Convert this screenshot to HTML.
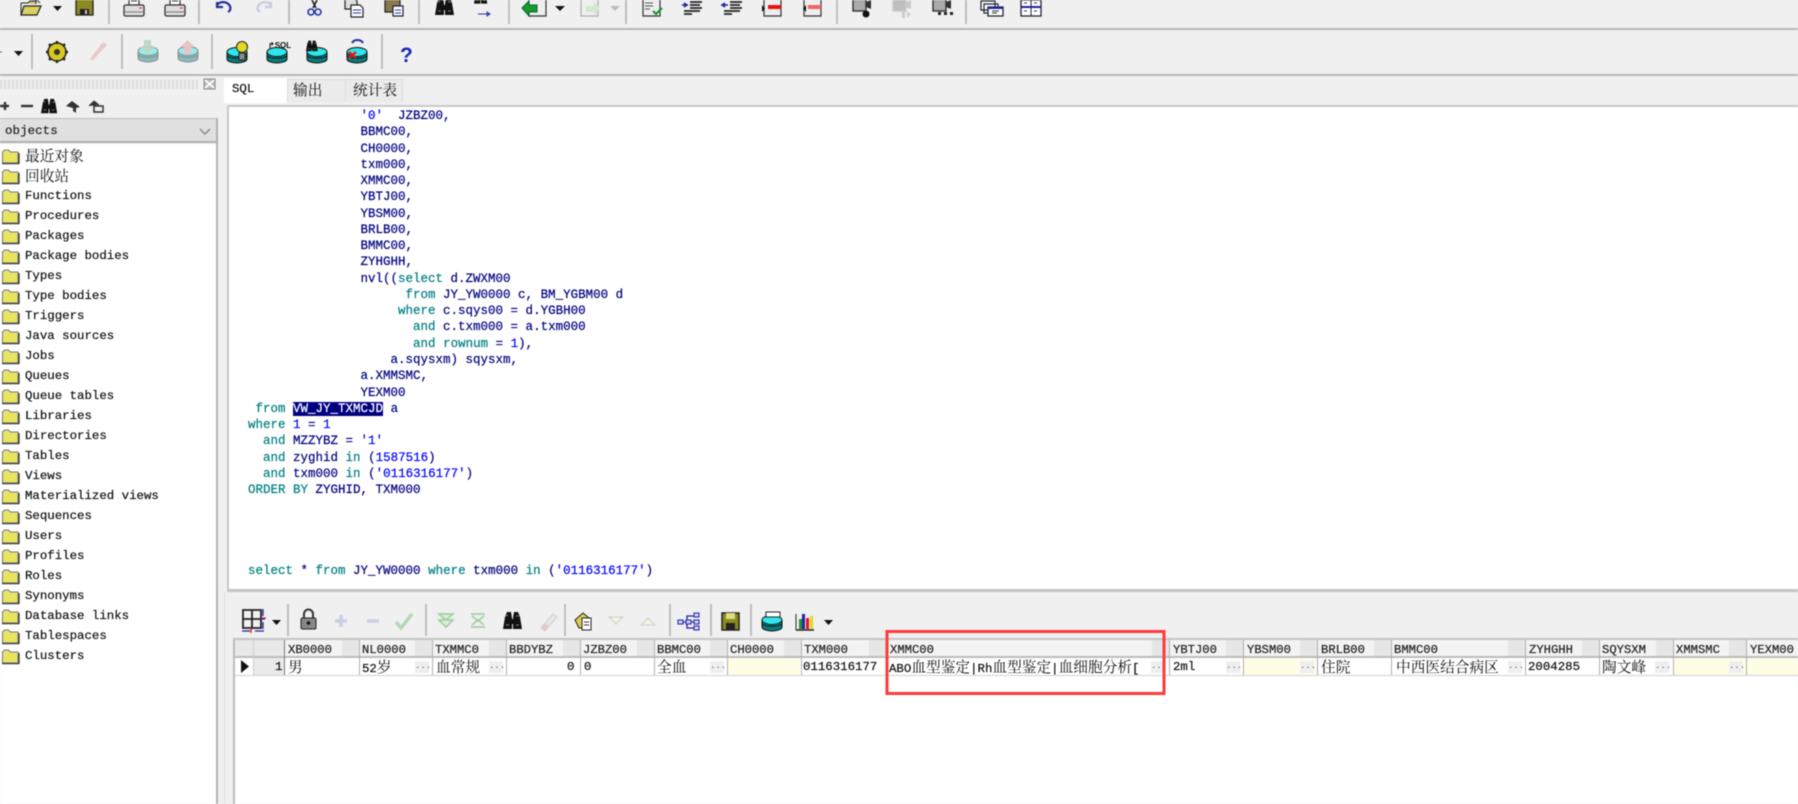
<!DOCTYPE html>
<html><head><meta charset="utf-8"><style>
html,body{margin:0;padding:0;background:#f0f0f0;overflow:hidden}
#r{position:relative;width:1798px;height:804px;overflow:hidden;background:#f0f0f0;filter:blur(.4px);font-family:"Liberation Mono","Noto Serif CJK SC",monospace;font-size:12.4px;color:#111;-webkit-text-stroke:.2px}
.a{position:absolute}
.t{position:absolute;white-space:nowrap;line-height:20px;height:20px}
.c{font-family:"Noto Serif CJK SC","Liberation Mono",serif;font-size:14.7px;-webkit-text-stroke:0}
pre{position:absolute;left:248px;top:108px;margin:0;font:12.5px/16.27px "Liberation Mono",monospace;color:#000080}
pre b{font-weight:normal;color:#008080}pre i{font-style:normal;color:#0000ff}
pre u{text-decoration:none;background:#000080;color:#fff}
.hd{position:absolute;top:641px;height:18px;line-height:18px;white-space:nowrap;color:#222;font-size:12.2px}
.v{position:absolute;top:658px;height:17px;line-height:18px;white-space:nowrap;color:#111}
.v span{font-family:"Noto Serif CJK SC",serif;font-size:14.7px;-webkit-text-stroke:0}
.b{position:absolute;top:661px;width:14px;height:12px;background:#eee;color:#666;font-size:9px;line-height:10px;text-align:center;-webkit-text-stroke:0}
.y{position:absolute;top:658px;height:17px;background:#fffde6}
.l{position:absolute;top:640px;width:1px;height:35px;background:#b0b0b0}
.s{position:absolute;width:2px;background:#bdbdbd}
.h{position:absolute;top:640px;width:17px;height:16px;background:#e6e6e6}
</style></head><body><div id="r">
<!-- bars -->
<div class="a" style="left:0;top:28px;width:1798px;height:2px;background:#b5b5b5"></div>
<div class="a" style="left:0;top:74px;width:1798px;height:2px;background:#b5b5b5"></div>
<!-- toolbar seps -->
<div class="s" style="left:108px;top:0;height:24px"></div><div class="s" style="left:198px;top:0;height:24px"></div><div class="s" style="left:288px;top:0;height:24px"></div><div class="s" style="left:418px;top:0;height:24px"></div><div class="s" style="left:508px;top:0;height:24px"></div><div class="s" style="left:625px;top:0;height:24px"></div><div class="s" style="left:836px;top:0;height:24px"></div><div class="s" style="left:965px;top:0;height:24px"></div>
<div class="s" style="left:31px;top:34px;height:35px"></div><div class="s" style="left:121px;top:34px;height:35px"></div><div class="s" style="left:211px;top:34px;height:35px"></div><div class="s" style="left:381px;top:34px;height:35px"></div>
<!-- left panel -->
<div class="a" style="left:0;top:80px;width:200px;height:9px;background:repeating-linear-gradient(90deg,#dcdcdc 0 2px,#f0f0f0 2px 4px)"></div>
<div class="a" style="left:0;top:118px;width:216px;height:25px;background:#e0e0e0;border-top:1px solid #bbb;border-bottom:2px solid #b0b0b0;box-sizing:border-box"></div>
<div class="t" style="left:5px;top:121px;color:#222;letter-spacing:.1px">objects</div>
<div class="a" style="left:0;top:144px;width:216px;height:660px;background:#fff"></div>
<div class="a" style="left:216px;top:118px;width:2px;height:686px;background:#b2b2b2"></div>
<div class="a" style="left:224px;top:592px;width:1px;height:212px;background:#dedede"></div>
<div class="t c" style="left:25px;top:146px">最近对象</div>
<div class="t c" style="left:25px;top:166px">回收站</div>
<div class="t" style="left:25px;top:186px">Functions</div>
<div class="t" style="left:25px;top:206px">Procedures</div>
<div class="t" style="left:25px;top:226px">Packages</div>
<div class="t" style="left:25px;top:246px">Package bodies</div>
<div class="t" style="left:25px;top:266px">Types</div>
<div class="t" style="left:25px;top:286px">Type bodies</div>
<div class="t" style="left:25px;top:306px">Triggers</div>
<div class="t" style="left:25px;top:326px">Java sources</div>
<div class="t" style="left:25px;top:346px">Jobs</div>
<div class="t" style="left:25px;top:366px">Queues</div>
<div class="t" style="left:25px;top:386px">Queue tables</div>
<div class="t" style="left:25px;top:406px">Libraries</div>
<div class="t" style="left:25px;top:426px">Directories</div>
<div class="t" style="left:25px;top:446px">Tables</div>
<div class="t" style="left:25px;top:466px">Views</div>
<div class="t" style="left:25px;top:486px">Materialized views</div>
<div class="t" style="left:25px;top:506px">Sequences</div>
<div class="t" style="left:25px;top:526px">Users</div>
<div class="t" style="left:25px;top:546px">Profiles</div>
<div class="t" style="left:25px;top:566px">Roles</div>
<div class="t" style="left:25px;top:586px">Synonyms</div>
<div class="t" style="left:25px;top:606px">Database links</div>
<div class="t" style="left:25px;top:626px">Tablespaces</div>
<div class="t" style="left:25px;top:646px">Clusters</div>
<!-- tabs -->
<div class="a" style="left:287px;top:79px;width:57px;height:22px;background:#ebebeb;border:1px solid #ddd;border-bottom:none"></div>
<div class="a" style="left:345px;top:79px;width:56px;height:22px;background:#ebebeb;border:1px solid #ddd;border-bottom:none"></div>
<div class="a" style="left:224px;top:78px;width:63px;height:25px;background:#fff"></div>
<div class="t" style="left:232px;top:79px">SQL</div>
<div class="t c" style="left:293px;top:80px">输出</div>
<div class="t c" style="left:353px;top:80px">统计表</div>
<!-- editor -->
<div class="a" style="left:227px;top:105px;width:1571px;height:484px;background:#fff;border-top:2px solid #c8c8c8;border-left:2px solid #c8c8c8;box-sizing:border-box"></div>
<div class="a" style="left:227px;top:589px;width:1571px;height:3px;background:#c4c4c4"></div>
<pre>               <i>'0'</i>  JZBZ00,
               BBMC00,
               CH0000,
               txm000,
               XMMC00,
               YBTJ00,
               YBSM00,
               BRLB00,
               BMMC00,
               ZYHGHH,
               nvl((<b>select</b> d.ZWXM00
                     <b>from</b> JY_YW0000 c, BM_YGBM00 d
                    <b>where</b> c.sqys00 = d.YGBH00
                      <b>and</b> c.txm000 = a.txm000
                      <b>and</b> <b>rownum</b> = <i>1</i>),
                   a.sqysxm) sqysxm,
               a.XMMSMC,
               YEXM00
 <b>from</b> <u>VW_JY_TXMCJD</u> a
<b>where</b> <i>1</i> = <i>1</i>
  <b>and</b> MZZYBZ = <i>'1'</i>
  <b>and</b> zyghid <b>in</b> (<i>1587516</i>)
  <b>and</b> txm000 <b>in</b> (<i>'0116316177'</i>)
<b>ORDER BY</b> ZYGHID, TXM000




<b>select</b> * <b>from</b> JY_YW0000 <b>where</b> txm000 <b>in</b> (<i>'0116316177'</i>)</pre>
<!-- grid panel -->
<div class="s" style="left:287px;top:604px;height:32px"></div><div class="s" style="left:425px;top:604px;height:32px"></div><div class="s" style="left:564px;top:604px;height:32px"></div><div class="s" style="left:669px;top:604px;height:32px"></div><div class="s" style="left:710px;top:604px;height:32px"></div><div class="s" style="left:750px;top:604px;height:32px"></div>
<div class="a" style="left:233px;top:638px;width:1565px;height:166px;background:#fff;border-left:2px solid #bcbcbc;box-sizing:border-box"></div>
<div class="a" style="left:235px;top:638px;width:1563px;height:2px;background:#c4c4c4"></div>
<div class="a" style="left:235px;top:640px;width:1563px;height:18px;background:#f3f3f3;border-bottom:2px solid #bcbcbc;box-sizing:border-box"></div>
<div class="a" style="left:235px;top:640px;width:49px;height:16px;background:#e8e8e8"></div>
<div class="h" style="left:342px"></div><div class="h" style="left:415px"></div><div class="h" style="left:489px"></div><div class="h" style="left:563px"></div><div class="h" style="left:637px"></div><div class="h" style="left:710px"></div><div class="h" style="left:784px"></div><div class="h" style="left:869px"></div><div class="h" style="left:1152px"></div><div class="h" style="left:1226px"></div><div class="h" style="left:1300px"></div><div class="h" style="left:1374px"></div><div class="h" style="left:1508px"></div><div class="h" style="left:1582px"></div><div class="h" style="left:1656px"></div><div class="h" style="left:1729px"></div>
<div class="a" style="left:235px;top:658px;width:49px;height:17px;background:#eaeaea"></div>
<div class="a" style="left:235px;top:675px;width:1563px;height:1px;background:#d0d0d0"></div>
<div class="a" style="left:235px;top:658px;width:18px;height:17px;background:#fff"></div>
<div class="y" style="left:728px;width:72px"></div><div class="y" style="left:1244px;width:73px"></div><div class="y" style="left:1674px;width:72px"></div><div class="y" style="left:1747px;width:51px"></div>
<div class="l" style="left:253px;background:#ccc"></div><div class="l" style="left:284px;background:#777"></div><div class="l" style="left:359px"></div><div class="l" style="left:432px"></div><div class="l" style="left:506px"></div><div class="l" style="left:580px"></div><div class="l" style="left:654px"></div><div class="l" style="left:727px"></div><div class="l" style="left:801px"></div><div class="l" style="left:886px"></div><div class="l" style="left:1169px"></div><div class="l" style="left:1243px"></div><div class="l" style="left:1317px"></div><div class="l" style="left:1391px"></div><div class="l" style="left:1525px"></div><div class="l" style="left:1599px"></div><div class="l" style="left:1673px"></div><div class="l" style="left:1746px"></div>
<div class="hd" style="left:288px">XB0000</div><div class="hd" style="left:362px">NL0000</div><div class="hd" style="left:435px">TXMMC0</div><div class="hd" style="left:509px">BBDYBZ</div><div class="hd" style="left:583px">JZBZ00</div><div class="hd" style="left:657px">BBMC00</div><div class="hd" style="left:730px">CH0000</div><div class="hd" style="left:804px">TXM000</div><div class="hd" style="left:890px">XMMC00</div><div class="hd" style="left:1173px">YBTJ00</div><div class="hd" style="left:1247px">YBSM00</div><div class="hd" style="left:1321px">BRLB00</div><div class="hd" style="left:1394px">BMMC00</div><div class="hd" style="left:1529px">ZYHGHH</div><div class="hd" style="left:1602px">SQYSXM</div><div class="hd" style="left:1676px">XMMSMC</div><div class="hd" style="left:1750px">YEXM00</div>
<div class="v" style="left:275px">1</div>
<div class="v" style="left:288px"><span>男</span></div>
<div class="v" style="left:362px">52<span>岁</span></div>
<div class="v" style="left:436px"><span>血常规</span></div>
<div class="v" style="left:567px">0</div>
<div class="v" style="left:584px">0</div>
<div class="v" style="left:657px"><span>全血</span></div>
<div class="v" style="left:803px">0116316177</div>
<div class="v" style="left:889px">ABO<span>血型鉴定</span>|Rh<span>血型鉴定</span>|<span>血细胞分析</span>[</div>
<div class="v" style="left:1173px">2ml</div>
<div class="v" style="left:1321px"><span>住院</span></div>
<div class="v" style="left:1396px"><span>中西医结合病区</span></div>
<div class="v" style="left:1528px">2004285</div>
<div class="v" style="left:1602px"><span>陶文峰</span></div>
<div class="b" style="left:415px">...</div><div class="b" style="left:489px">...</div><div class="b" style="left:710px">...</div><div class="b" style="left:1151px">...</div><div class="b" style="left:1226px">...</div><div class="b" style="left:1300px">...</div><div class="b" style="left:1508px">...</div><div class="b" style="left:1655px">...</div><div class="b" style="left:1729px">...</div>
<!-- icons -->
<svg class="a" style="left:0;top:0;-webkit-text-stroke:0" width="1798" height="804" viewBox="0 0 1798 804" fill="none">
<defs>
<g id="f"><path d="M1.500 4l2-2h4l2 2h7.500v11H1.500z" fill="#e6e27a" stroke="#777"/><path d="M3 6h13.500v8H3z" fill="#e8e45c"/><path d="M1 15.500h17M18 5v11" stroke="#444" stroke-width="1.400"/></g>
<g id="pr"><path d="M7-5h10v10H7z" fill="#fff" stroke="#333" stroke-width="1.2"/><path d="M9-2h6M9 1h6" stroke="#333"/><rect x="2" y="5" width="20" height="11" rx="1.500" fill="#ddd" stroke="#333" stroke-width="1.3"/><path d="M3 12h18" stroke="#777"/><path d="M17 8h3" stroke="#e33"/></g>
<g id="db"><ellipse cx="10" cy="15" rx="10" ry="4" fill="#0a7a7a" stroke="#111"/><rect x="0" y="8" width="20" height="7" fill="#0a8a8a"/><path d="M0 8v7M20 8v7M0 12c3 3 17 3 20 0" stroke="#111"/><ellipse cx="10" cy="8" rx="10" ry="4.500" fill="#2fe6ea" stroke="#111"/></g>
<g id="bi"><path d="M0 18l2-12 2-5h4l1 6v11zM19 18l-2-12-2-5h-4l-1 6v11z" fill="#111"/><path d="M8 8h3v5H8z" fill="#111"/><path d="M3 5l2-1M13 5h3M3 14h3M13 14h3" stroke="#888"/></g>
<g id="dc"><path d="M1-4h13l4 4v16H1z" fill="#eee" stroke="#333" stroke-width="1.200"/></g>
<g id="cam"><rect x="1" y="-6" width="13" height="13" fill="#aaa" stroke="currentColor" stroke-width="1.400"/><path d="M14-2l5-2v9l-5-2z" fill="currentColor"/></g>
</defs>
<!-- tree folders -->
<use href="#f" x="1" y="148"/><use href="#f" x="1" y="168"/><use href="#f" x="1" y="188"/><use href="#f" x="1" y="208"/><use href="#f" x="1" y="228"/><use href="#f" x="1" y="248"/><use href="#f" x="1" y="268"/><use href="#f" x="1" y="288"/><use href="#f" x="1" y="308"/><use href="#f" x="1" y="328"/><use href="#f" x="1" y="348"/><use href="#f" x="1" y="368"/><use href="#f" x="1" y="388"/><use href="#f" x="1" y="408"/><use href="#f" x="1" y="428"/><use href="#f" x="1" y="448"/><use href="#f" x="1" y="468"/><use href="#f" x="1" y="488"/><use href="#f" x="1" y="508"/><use href="#f" x="1" y="528"/><use href="#f" x="1" y="548"/><use href="#f" x="1" y="568"/><use href="#f" x="1" y="588"/><use href="#f" x="1" y="608"/><use href="#f" x="1" y="628"/><use href="#f" x="1" y="648"/>
<!-- toolbar 1 -->
<path d="M21 3h7l2-2h6v3" fill="#c8c060" stroke="#222"/><path d="M21 15l3-9h17l-4 9z" fill="#d8d060" stroke="#222" stroke-width="1.200"/><path d="M21 3v12" stroke="#222"/><path d="M33 1l5-1M37 0l3 3" stroke="#446" stroke-width="1.200"/>
<path d="M53 6h9l-4.500 5z" fill="#111"/>
<path d="M76-1h17v16H76z" fill="#8a8a20" stroke="#222" stroke-width="1.300"/><path d="M80 9h9v6h-9z" fill="#222"/><path d="M85 10h2v4h-2z" fill="#ccc"/>
<use href="#pr" x="122" y="0"/><use href="#pr" x="163" y="0"/>
<path d="M217 5c3-4 10-4 13 1 1 3 0 5-2 6M217 2v5h6" stroke="#23309a" stroke-width="2.200"/>
<path d="M271 5c-3-4-10-4-13 1-1 3 0 5 2 6M271 2v5h-6" stroke="#c8cadf" stroke-width="2.200"/>
<path d="M311-2l5 10M318-2l-5 10" stroke="#222" stroke-width="1.600"/><circle cx="311" cy="12" r="3" stroke="#2636a8" stroke-width="1.600"/><circle cx="318" cy="12" r="3" stroke="#2636a8" stroke-width="1.600"/>
<path d="M345-2h9l3 3v8h-12z" fill="#ddd" stroke="#222" stroke-width="1.200"/><path d="M351 5h9l3 3v9h-12z" fill="#fff" stroke="#223" stroke-width="1.200"/><path d="M353 10h8M353 13h8" stroke="#2636a8"/>
<path d="M385-2h15v14h-15z" fill="#8a7a50" stroke="#222" stroke-width="1.200"/><path d="M393 6h10v10h-10z" fill="#fff" stroke="#223" stroke-width="1.200"/><path d="M395 10h6M395 13h6" stroke="#2636a8"/>
<use href="#bi" x="435" y="-3"/>
<g transform="translate(474,-9) scale(.7)"><use href="#bi"/></g><path d="M478 14h12M490 14l-3-2v4z" stroke="#2636a8"/>
<use href="#dc" x="528" y="0"/><path d="M522 8l7-7v4h8v7h-8v4z" fill="#1a9a2a" stroke="#063"/><path d="M555 6h10l-5 5z" fill="#111"/>
<g opacity=".35"><use href="#dc" x="580" y="0"/><path d="M600 8l-6-6v4h-8v6h8v4z" fill="#9d9"/></g><path d="M610 6h10l-5 5z" fill="#bbb"/>
<use href="#dc" x="642" y="0"/><path d="M645 3h8M645 6h8M645 9h5" stroke="#555"/><path d="M653 11l3 3 6-6" stroke="#1a9a2a" stroke-width="2.200"/>
<path d="M690 2h12M690 5h10M690 8h12M684 11h16M684 14h8" stroke="#222" stroke-width="1.800"/><path d="M682 5h6M684 3l3 2-3 2" stroke="#22a" stroke-width="1.600"/>
<path d="M730 2h12M730 5h10M730 8h12M724 11h16M724 14h8" stroke="#222" stroke-width="1.800"/><path d="M722 5h6M725 3l-3 2 3 2" stroke="#22a" stroke-width="1.600"/>
<use href="#dc" x="763" y="0"/><path d="M768 5h13v4h-13z" fill="#e11"/><path d="M762 5v7l3-3.500z" fill="#111"/>
<use href="#dc" x="803" y="0"/><path d="M808 5h13v4h-13z" fill="#e66"/><path d="M806 5v7l-3-3.500z" fill="#111"/>
<g transform="translate(852,4)" color="#333"><use href="#cam"/></g><circle cx="866" cy="14" r="3.500" fill="#111"/>
<g transform="translate(892,4)" color="#bbb" opacity=".7"><use href="#cam"/></g><path d="M902 11h3v7h-3zM907 11l4 3.500-4 3.500z" fill="#ccc"/>
<g transform="translate(932,4)" color="#333"><use href="#cam"/></g><path d="M938 12h3v3h-3zM944 12h3v3h-3zM950 12h3v3h-3z" fill="#222"/>
<path d="M981 1h14v9h-14zM984 4h14v9h-14z" fill="#fff" stroke="#223" stroke-width="1.200"/><path d="M988 7h15v9h-15z" fill="#fff" stroke="#223" stroke-width="1.300"/><path d="M988 8h15" stroke="#22a" stroke-width="2"/><path d="M992 11h7M992 13h5" stroke="#333"/>
<path d="M1021 0h20v16h-20z" fill="#fff" stroke="#223" stroke-width="1.300"/><path d="M1031 0v16M1021 7h20" stroke="#223"/><path d="M1021 7h20" stroke="#22a" stroke-width="2"/><path d="M1024 3h3M1034 3h3M1024 11h3M1034 11h3" stroke="#333"/>
<!-- toolbar 2 -->
<path d="M0 52h2" stroke="#555"/><path d="M14 51h9l-4.500 5z" fill="#111"/>
<circle cx="57" cy="52" r="9" fill="#d8c820" stroke="#222" stroke-width="1.500"/><circle cx="57" cy="52" r="3" fill="#333"/><path d="M57 41v3M57 60v3M46 52h3M65 52h3M49 44l2 2M63 58l2 2M65 44l-2 2M51 58l-2 2" stroke="#222" stroke-width="2.400"/>
<path d="M91 60l6-8 7-9M92 59l14-15" stroke="#ebcaca" stroke-width="3"/>
<g opacity=".45"><use href="#db" x="138" y="43"/><path d="M144 40h7v7h4l-7.500 7-7.500-7h4z" fill="#7ebb8e"/></g>
<g opacity=".45"><use href="#db" x="178" y="43"/><path d="M184 54h7v-7h4l-7.500-7-7.500 7h4z" fill="#e39090"/></g>
<use href="#db" x="227" y="44"/><circle cx="242" cy="47" r="5.500" fill="#e5d820" stroke="#222"/><path d="M239 53h6v7h-6z" fill="#888" stroke="#222"/>
<use href="#db" x="267" y="44"/><text x="268" y="48" font-family="Liberation Sans,sans-serif" font-size="8" font-weight="bold" fill="#111">↱SQL</text>
<use href="#db" x="307" y="44"/><g transform="translate(306,40) scale(.62)"><use href="#bi"/></g>
<use href="#db" x="347" y="44"/><path d="M352 43c2-4 9-4 11 0" stroke="#23309a" stroke-width="2"/><path d="M349 52l7 6M356 52l-7 6" stroke="#e11" stroke-width="2.200"/>
<text x="400" y="62" font-family="Liberation Sans,sans-serif" font-size="21" font-weight="bold" fill="#1a2ab0">?</text>
<!-- panel mini icons -->
<path d="M0 106h9M5 102v8" stroke="#333" stroke-width="2.400"/><path d="M21 106h12" stroke="#333" stroke-width="2.400"/>
<g transform="translate(41,98)scale(.85)"><use href="#bi"/></g>
<path d="M66 106l6-5 8 6-4 1v5l-3-2v-3z" fill="#333"/><path d="M89 106l5-5 5 4" fill="#333" stroke="#333"/><path d="M94 106h9v6h-9z" stroke="#333" stroke-width="1.500"/>
<path d="M204 79h11v10h-11z" fill="#bbb" stroke="#888"/><path d="M205 80l9 8M214 80l-9 8" stroke="#fff" stroke-width="1.800"/>
<path d="M200 129l5 5 5-5" stroke="#888" stroke-width="1.500"/>
<!-- grid toolbar -->
<path d="M243 610h18v18h-18zM252 610v18M243 619h18" stroke="#222" stroke-width="1.800"/><path d="M263 609v7M263 622v7M260 619h5" stroke="#22a" stroke-width="1.300"/><path d="M261 618h5" stroke="#e11"/><path d="M242 631h8M255 631h9" stroke="#22a" stroke-width="1.300"/><path d="M251 628v5" stroke="#e11" stroke-width="1.300"/>
<path d="M272 620h9l-4.500 5z" fill="#111"/>
<path d="M304 618v-4a4.500 4.500 0 0 1 9 0v4" stroke="#333" stroke-width="2"/><rect x="301" y="618" width="15" height="11" rx="1.500" fill="#888" stroke="#222"/><circle cx="308.500" cy="623" r="1.800" fill="#111"/>
<path d="M335 621h12M341 615v12" stroke="#c9cfe4" stroke-width="3.500"/><path d="M367 621h12" stroke="#c9cfe4" stroke-width="3.500"/>
<path d="M396 622l5 6 11-14" stroke="#b5d8b5" stroke-width="3.500"/>
<path d="M439 614h14l-7 6zM439 620h14l-7 7z" stroke="#a3d0a3" stroke-width="1.700" fill="#ddeedd"/><path d="M471 614h14M471 627h14M472 616l6 5 6-5M472 625l6-5 6 5" stroke="#a3d0a3" stroke-width="1.700"/>
<use href="#bi" x="503" y="611"/>
<path d="M541 628l12-14 4 3-12 14z" fill="#e8e8e8" stroke="#cfcfcf"/><path d="M541 628l4-5 4 3-4 5z" fill="#e8c8c8"/>
<path d="M575 620l8-7 6 5v10h-10z" fill="#d8d050" stroke="#222"/><path d="M582 618h9v12h-9z" fill="#fff" stroke="#222"/><path d="M584 622h5M584 625h5" stroke="#333"/>
<path d="M609 617h14l-7 7z" fill="#f4f4dc" stroke="#ccc"/><path d="M641 625h14l-7-7z" fill="#f4f4dc" stroke="#ccc"/>
<path d="M680 622h7M687 622v-6h7M687 622v6h7M687 622h7" stroke="#22a" stroke-width="1.300"/><path d="M678 620h5v4h-5zM686 620h5v4h-5zM694 613h5v4h-5zM694 620h5v4h-5zM694 626h5v4h-5z" fill="#cfd4f0" stroke="#22a"/>
<path d="M722 613h17v17h-17z" fill="#8a8a20" stroke="#222" stroke-width="1.500"/><path d="M726 623h9v7h-9z" fill="#222"/><path d="M726 613h9v6h-9z" fill="#dddd80"/>
<use href="#db" x="762" y="612"/><path d="M766 612h14v5h-14z" fill="#fff" stroke="#222"/>
<path d="M796 630v-16" stroke="#222"/><path d="M796 630h18" stroke="#222" stroke-width="1.500"/><path d="M799 619h3v10h-3z" fill="#1a9a2a"/><path d="M802 614h3v15h-3z" fill="#22a"/><path d="M806 618h3v11h-3z" fill="#e11"/><path d="M810 616h3v13h-3z" fill="#e5d820"/>
<path d="M824 620h9l-4.500 5z" fill="#111"/>
<!-- row indicator -->
<path d="M241 660v13l8-6.500z" fill="#111"/>
<!-- red box -->
<rect x="887" y="631.500" width="277" height="62" stroke="#ff3a3a" stroke-width="3"/>
</svg>
</div></body></html>
